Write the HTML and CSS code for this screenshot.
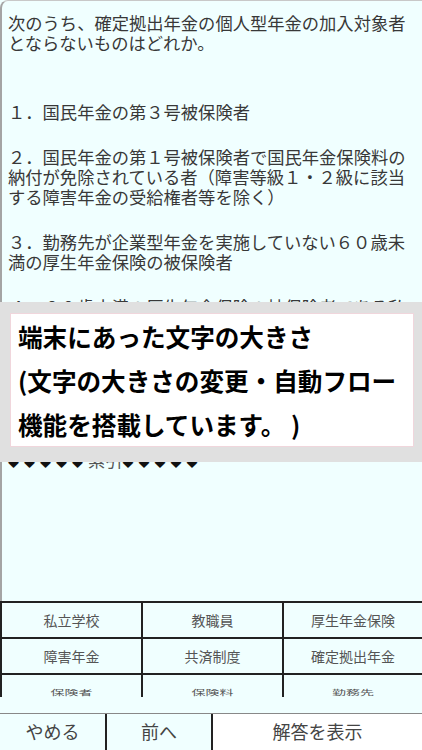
FILE: index.html
```html
<!DOCTYPE html>
<html lang="ja">
<head>
<meta charset="utf-8">
<title>確定拠出年金 問題</title>
<link rel="stylesheet" href="styles.css">
</head>
<body>
<div class="app">
  <div class="content">
    <p class="question">次のうち、確定拠出年金の個人型年金の加入対象者<br>とならないものはどれか。</p>
    <p class="item item-first">１．国民年金の第３号被保険者</p>
    <p class="item">２．国民年金の第１号被保険者で国民年金保険料の<br>納付が免除されている者（障害等級１・２級に該当<br>する障害年金の受給権者等を除く）</p>
    <p class="item">３．勤務先が企業型年金を実施していない６０歳未<br>満の厚生年金保険の被保険者</p>
    <p class="item">４．６０歳未満の厚生年金保険の被保険者である私<br>立学校教職員共済制度の加入者</p>
    <p class="index"><span class="dia">◆◆◆◆◆</span>索引<span class="dia">◆◆◆◆◆</span></p>
  </div>
  <div class="keys">
    <div class="key">私立学校</div>
    <div class="key">教職員</div>
    <div class="key">厚生年金保険</div>
    <div class="key">障害年金</div>
    <div class="key">共済制度</div>
    <div class="key">確定拠出年金</div>
    <div class="key"><span class="squash">保険者</span></div>
    <div class="key"><span class="squash">保険料</span></div>
    <div class="key"><span class="squash">勤務先</span></div>
  </div>
  <div class="gap"></div>
  <div class="buttons">
    <div class="btn btn-quit">やめる</div>
    <div class="btn btn-prev">前へ</div>
    <div class="btn btn-answer">解答を表示</div>
  </div>
  <div class="overlay">
    <div class="notice">端末にあった文字の大きさ<br>(文字の大きさの変更・自動フロー<br>機能を搭載しています。 )</div>
  </div>
</div>
</body>
</html>
```
FILE: styles.css
```css
* { box-sizing: border-box; }
html, body { margin: 0; padding: 0; }
body {
  font-family: "Noto Sans CJK JP", "Noto Sans", sans-serif;
  background: #f0ffff;
}
.app {
  position: relative;
  width: 422px;
  height: 750px;
  display: flex;
  flex-direction: column;
  background: #f0ffff;
  overflow: hidden;
}
.content {
  height: 601px;
  flex: none;
  border-left: 2px solid #a4a4a4;
  border-top: 1px solid #c8c8c8;
  border-top-left-radius: 8px;
  padding: 12px 0 0 6px;
  overflow: hidden;
  color: #383838;
  font-size: 17.3px;
  line-height: 20px;
  white-space: nowrap;
}
.content p { margin: 0; }
.question { margin-bottom: 49px !important; }
.item { margin-bottom: 25px !important; }
.index { margin-top: 113px !important; color: #555; }
.dia {
  color: #111;
  font-size: 11px;
  letter-spacing: 5px;
}
.keys {
  flex: none;
  height: 96px;
  border-top: 2px solid #222;
  border-left: 2px solid #222;
  display: grid;
  grid-template-columns: 141px 141px 1fr;
  grid-auto-rows: 36px;
  overflow: hidden;
}
.key {
  display: flex;
  align-items: center;
  justify-content: center;
  border-right: 2px solid #222;
  border-bottom: 2px solid #222;
  font-size: 14px;
  color: #555;
  padding-bottom: 1px;
}
.key:nth-child(3n) { border-right: none; }
.squash {
  display: inline-block;
  transform: scaleY(0.45);
}
.gap { flex: none; height: 16px; }
.buttons {
  flex: 1;
  display: flex;
  border-top: 1px solid #888;
}
.btn {
  display: flex;
  align-items: center;
  justify-content: center;
  font-size: 18px;
  color: #444;
  padding-bottom: 2px;
}
.btn-quit { width: 107px; border-right: 2px solid #222; }
.btn-prev { width: 106px; border-right: 2px solid #222; }
.btn-answer { flex: 1; background: #fff; }
.overlay {
  position: absolute;
  top: 302px;
  left: 0;
  right: 0;
  height: 160px;
  background: #e0e0e0;
  padding: 11px 8px 0 10px;
}
.notice {
  background: #fff;
  border: 1px solid #f0d6dc;
  padding: 0 0 0 7px;
  font-size: 24.6px;
  line-height: 44px;
  font-weight: 700;
  color: #000;
  white-space: nowrap;
}
```
